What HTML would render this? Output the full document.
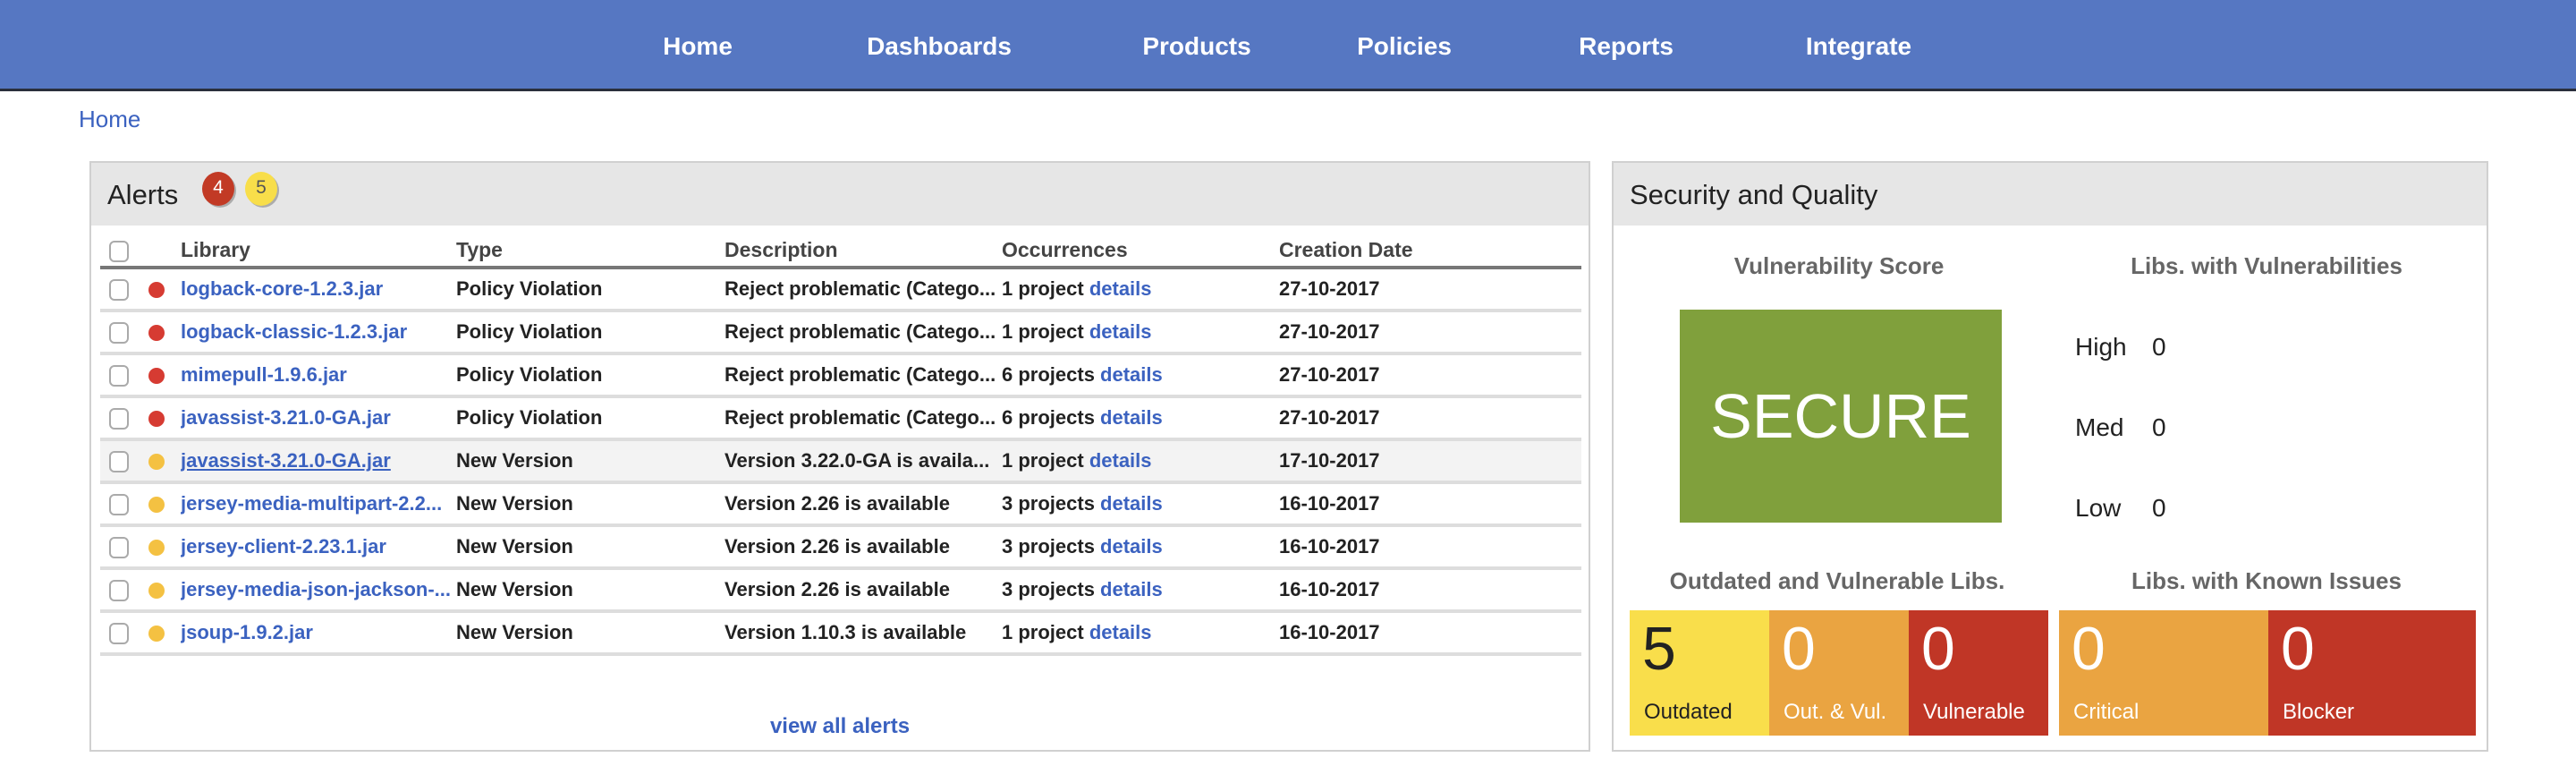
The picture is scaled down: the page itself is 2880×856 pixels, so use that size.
<!DOCTYPE html>
<html><head><meta charset="utf-8"><style>
html{zoom:2}
*{box-sizing:border-box;margin:0;padding:0}
body{width:1440px;height:428px;background:#fff;font-family:"Liberation Sans",sans-serif;position:relative;overflow:hidden;color:#222}
.nav{position:absolute;left:0;top:0;width:1440px;height:51px;background:#5677c2;border-bottom:1.5px solid #2a2f3c}
.nav span{position:absolute;top:18px;color:#fff;font-weight:bold;font-size:14px;transform:translateX(-50%)}
.bc{position:absolute;left:44px;top:59px;color:#3b62c0;font-size:13px}
.panel{position:absolute;border:1px solid #d0d0d0;background:#fff}
.ph{height:35px;background:#e6e6e6;font-size:15.5px;padding:9px 9px;color:#222}
.badge{position:absolute;top:5px;width:18px;height:19px;border-radius:50%;font-size:10.5px;text-align:center;line-height:18px;box-shadow:1px 1px 0 rgba(0,0,0,.25)}
table{position:absolute;left:5px;top:42px;width:828px;border-collapse:collapse;font-size:11px;table-layout:fixed}
th{text-align:left;font-weight:bold;color:#444;height:14px;padding-bottom:2px;border-bottom:2px solid #777;font-size:11.5px}
td{height:24px;border-bottom:2px solid #ddd;font-weight:bold;white-space:nowrap;overflow:hidden;color:#222}
a{color:#3b62c0;text-decoration:none}
.cb{display:inline-block;width:11px;height:12px;border:1px solid #aaa;border-radius:3px;margin-left:5px;vertical-align:middle;background:#fff}
.dot{display:inline-block;width:9px;height:9px;border-radius:50%;vertical-align:middle}
.r{background:#d63b32}.y{background:#f4c142}
tr.hl td{background:#f3f3f3}
.sub{position:absolute;font-weight:bold;color:#666;font-size:13px;transform:translateX(-50%);white-space:nowrap}
.tile{position:absolute;top:250px;height:70px;color:#fff}
.tile .n{position:absolute;left:7px;top:2px;font-size:34px;font-weight:300}
.tile .l{position:absolute;left:8px;top:50px;font-size:12px}
.lv{position:absolute;left:258px;font-size:14px;color:#222}
</style></head><body>
<div class="nav">
<span style="left:390px">Home</span><span style="left:525px">Dashboards</span><span style="left:669px">Products</span><span style="left:785px">Policies</span><span style="left:909px">Reports</span><span style="left:1039px">Integrate</span>
</div>
<div class="bc">Home</div>

<div class="panel" style="left:50px;top:90px;width:839px;height:330px">
<div class="ph">Alerts</div>
<div class="badge" style="left:62px;background:#c23a25;color:#fff">4</div>
<div class="badge" style="left:86px;background:#f8de4a;color:#555">5</div>
<table>
<colgroup><col style="width:27px"><col style="width:18px"><col style="width:154px"><col style="width:150px"><col style="width:155px"><col style="width:155px"><col></colgroup>
<tr><th><span class="cb"></span></th><th></th><th>Library</th><th>Type</th><th>Description</th><th>Occurrences</th><th>Creation Date</th></tr>
<tr><td><span class="cb"></span></td><td><span class="dot r"></span></td><td><a>logback-core-1.2.3.jar</a></td><td>Policy Violation</td><td>Reject problematic (Catego...</td><td>1 project <a>details</a></td><td>27-10-2017</td></tr>
<tr><td><span class="cb"></span></td><td><span class="dot r"></span></td><td><a>logback-classic-1.2.3.jar</a></td><td>Policy Violation</td><td>Reject problematic (Catego...</td><td>1 project <a>details</a></td><td>27-10-2017</td></tr>
<tr><td><span class="cb"></span></td><td><span class="dot r"></span></td><td><a>mimepull-1.9.6.jar</a></td><td>Policy Violation</td><td>Reject problematic (Catego...</td><td>6 projects <a>details</a></td><td>27-10-2017</td></tr>
<tr><td><span class="cb"></span></td><td><span class="dot r"></span></td><td><a>javassist-3.21.0-GA.jar</a></td><td>Policy Violation</td><td>Reject problematic (Catego...</td><td>6 projects <a>details</a></td><td>27-10-2017</td></tr>
<tr class="hl"><td><span class="cb"></span></td><td><span class="dot y"></span></td><td><a style="text-decoration:underline">javassist-3.21.0-GA.jar</a></td><td>New Version</td><td>Version 3.22.0-GA is availa...</td><td>1 project <a>details</a></td><td>17-10-2017</td></tr>
<tr><td><span class="cb"></span></td><td><span class="dot y"></span></td><td><a>jersey-media-multipart-2.2...</a></td><td>New Version</td><td>Version 2.26 is available</td><td>3 projects <a>details</a></td><td>16-10-2017</td></tr>
<tr><td><span class="cb"></span></td><td><span class="dot y"></span></td><td><a>jersey-client-2.23.1.jar</a></td><td>New Version</td><td>Version 2.26 is available</td><td>3 projects <a>details</a></td><td>16-10-2017</td></tr>
<tr><td><span class="cb"></span></td><td><span class="dot y"></span></td><td><a>jersey-media-json-jackson-...</a></td><td>New Version</td><td>Version 2.26 is available</td><td>3 projects <a>details</a></td><td>16-10-2017</td></tr>
<tr><td><span class="cb"></span></td><td><span class="dot y"></span></td><td><a>jsoup-1.9.2.jar</a></td><td>New Version</td><td>Version 1.10.3 is available</td><td>1 project <a>details</a></td><td>16-10-2017</td></tr>
</table>
<div style="position:absolute;left:0;width:837px;top:308px;text-align:center;font-size:12px;font-weight:bold"><a>view all alerts</a></div>
</div>

<div class="panel" style="left:901px;top:90px;width:490px;height:330px">
<div class="ph">Security and Quality</div>
<div class="sub" style="left:126px;top:50px">Vulnerability Score</div>
<div class="sub" style="left:365px;top:50px">Libs. with Vulnerabilities</div>
<div style="position:absolute;left:37px;top:82px;width:180px;height:119px;background:#80a03c;color:#fff;font-size:35px;text-align:center;line-height:119px">SECURE</div>
<div class="lv" style="top:95px">High</div><div class="lv" style="left:301px;top:95px">0</div>
<div class="lv" style="top:140px">Med</div><div class="lv" style="left:301px;top:140px">0</div>
<div class="lv" style="top:185px">Low</div><div class="lv" style="left:301px;top:185px">0</div>
<div class="sub" style="left:125px;top:226px">Outdated and Vulnerable Libs.</div>
<div class="sub" style="left:365px;top:226px">Libs. with Known Issues</div>
<div class="tile" style="left:9px;width:78px;background:#f9de4b;color:#222"><div class="n">5</div><div class="l">Outdated</div></div>
<div class="tile" style="left:87px;width:78px;background:#eaa441"><div class="n">0</div><div class="l">Out. &amp; Vul.</div></div>
<div class="tile" style="left:165px;width:78px;background:#c03626"><div class="n">0</div><div class="l">Vulnerable</div></div>
<div class="tile" style="left:249px;width:117px;background:#eaa441"><div class="n">0</div><div class="l">Critical</div></div>
<div class="tile" style="left:366px;width:116px;background:#c03626"><div class="n">0</div><div class="l">Blocker</div></div>
</div>
</body></html>
